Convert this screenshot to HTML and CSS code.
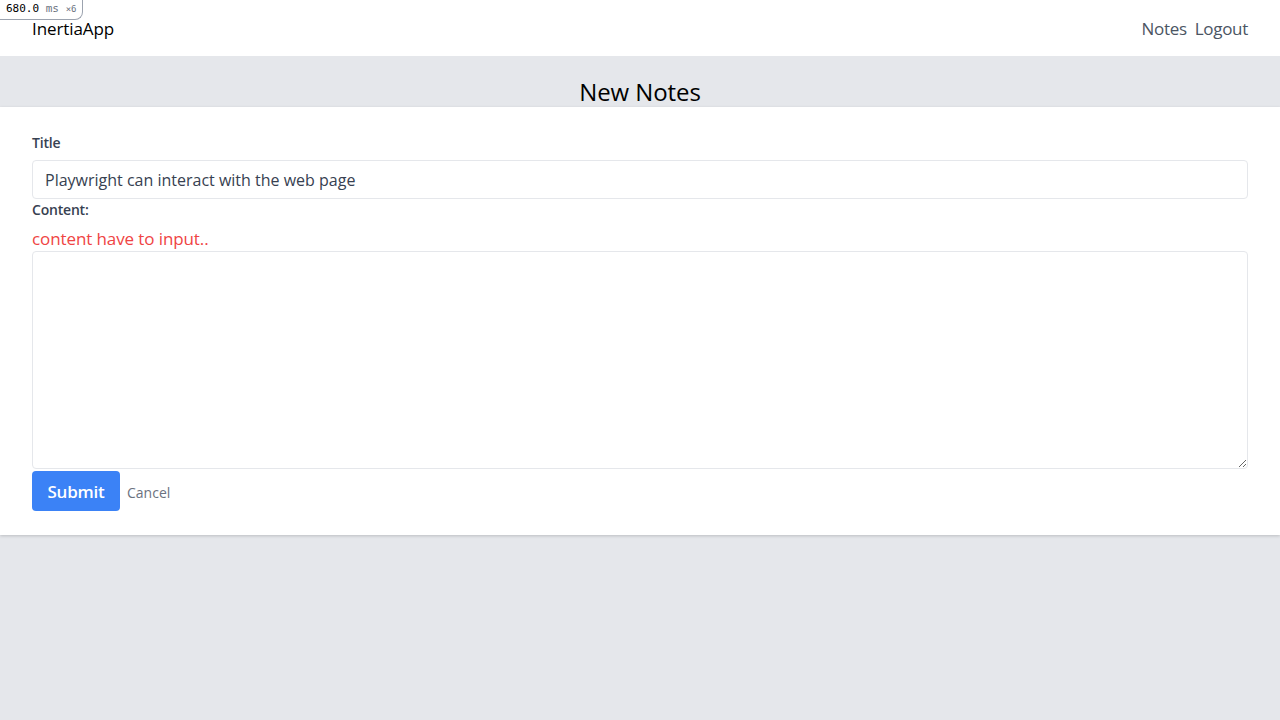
FILE: index.html
```html
<!DOCTYPE html>
<html>
<head>
<meta charset="utf-8">
<link rel="stylesheet" href="styles.css">
</head>
<body>
<div class="badge"><span class="ms">680.0</span> ms <span class="x">×6</span></div>
<nav class="nav">
  <div class="brand">InertiaApp</div>
  <div class="links"><a>Notes</a><a>Logout</a></div>
</nav>
<header class="head"><h1>New Notes</h1></header>
<main class="card">
  <form class="form">
    <label class="lbl lbl-title">Title</label>
    <input class="input" type="text" value="Playwright can interact with the web page">
    <label class="lbl lbl-content">Content:</label>
    <div class="error">content have to input..</div>
    <textarea class="textarea"></textarea>
    <div class="actions">
      <button class="btn" type="button">Submit</button>
      <a class="cancel">Cancel</a>
    </div>
  </form>
</main>
</body>
</html>
```

FILE: styles.css
```css
* { box-sizing: border-box; }
html, body { margin: 0; padding: 0; }
body {
  background: #e5e7eb;
  font-family: "Open Sans", "Noto Sans", sans-serif;
  height: 720px;
}
.badge {
  position: absolute;
  left: 0; top: 0;
  height: 20px;
  padding: 2px 6px 0 6px;
  background: #fff;
  border: 1px solid #9ca3af;
  border-top: none;
  border-left: none;
  border-bottom-right-radius: 8px;
  font-family: "DejaVu Sans Mono", monospace;
  font-size: 11px;
  color: #6b7280;
  z-index: 2;
}
.badge .ms { color: #000; }
.badge .x { font-size: 9px; }
.nav {
  height: 56px;
  background: #fff;
  display: flex;
  align-items: center;
  justify-content: space-between;
  padding: 0 32px;
}
.brand { font-size: 17px; color: #000; letter-spacing: -0.1px; }
.links { display: flex; gap: 8px; font-size: 17px; color: #4b5563; letter-spacing: -0.3px; }
.head {
  height: 51px;
  display: flex;
  align-items: flex-end;
  justify-content: center;
}
.head h1 {
  margin: 0;
  font-weight: 400;
  font-size: 24px;
  line-height: 30px;
  color: #000;
  letter-spacing: -0.1px;
}
.card {
  background: #fff;
  padding: 25px 32px 24px;
  box-shadow: 0 1px 3px rgba(0,0,0,0.18);
}
.form { display: flex; flex-direction: column; align-items: flex-start; }
.lbl {
  font-size: 14px;
  font-weight: 600;
  color: #374151;
  line-height: 20px;
  letter-spacing: -0.2px;
}
.lbl-title { line-height: 22px; margin-bottom: 6px; }
.input {
  width: 100%;
  height: 39px;
  border: 1px solid #e5e7eb;
  border-radius: 4px;
  padding: 0 12px;
  font-family: inherit;
  font-size: 16px;
  color: #374151;
  outline: none;
}
.lbl-content { margin-top: 1px; }
.error {
  margin-top: 7px;
  color: #ef4444;
  font-size: 17px;
  line-height: 24px;
  letter-spacing: -0.1px;
}
.textarea {
  width: 100%;
  height: 218px;
  border: 1px solid #e5e7eb;
  border-radius: 4px;
  resize: vertical;
  display: block;
  font-family: inherit;
  outline: none;
}
.actions { display: flex; align-items: center; gap: 7px; margin-top: 2px; }
.btn {
  background: #3b82f6;
  color: #fff;
  border: none;
  border-radius: 4px;
  height: 40px;
  width: 88px;
  font-family: inherit;
  font-size: 17px;
  font-weight: 600;
  letter-spacing: -0.2px;
}
.cancel { font-size: 14px; color: #6b7280; padding-top: 2px; }
```
